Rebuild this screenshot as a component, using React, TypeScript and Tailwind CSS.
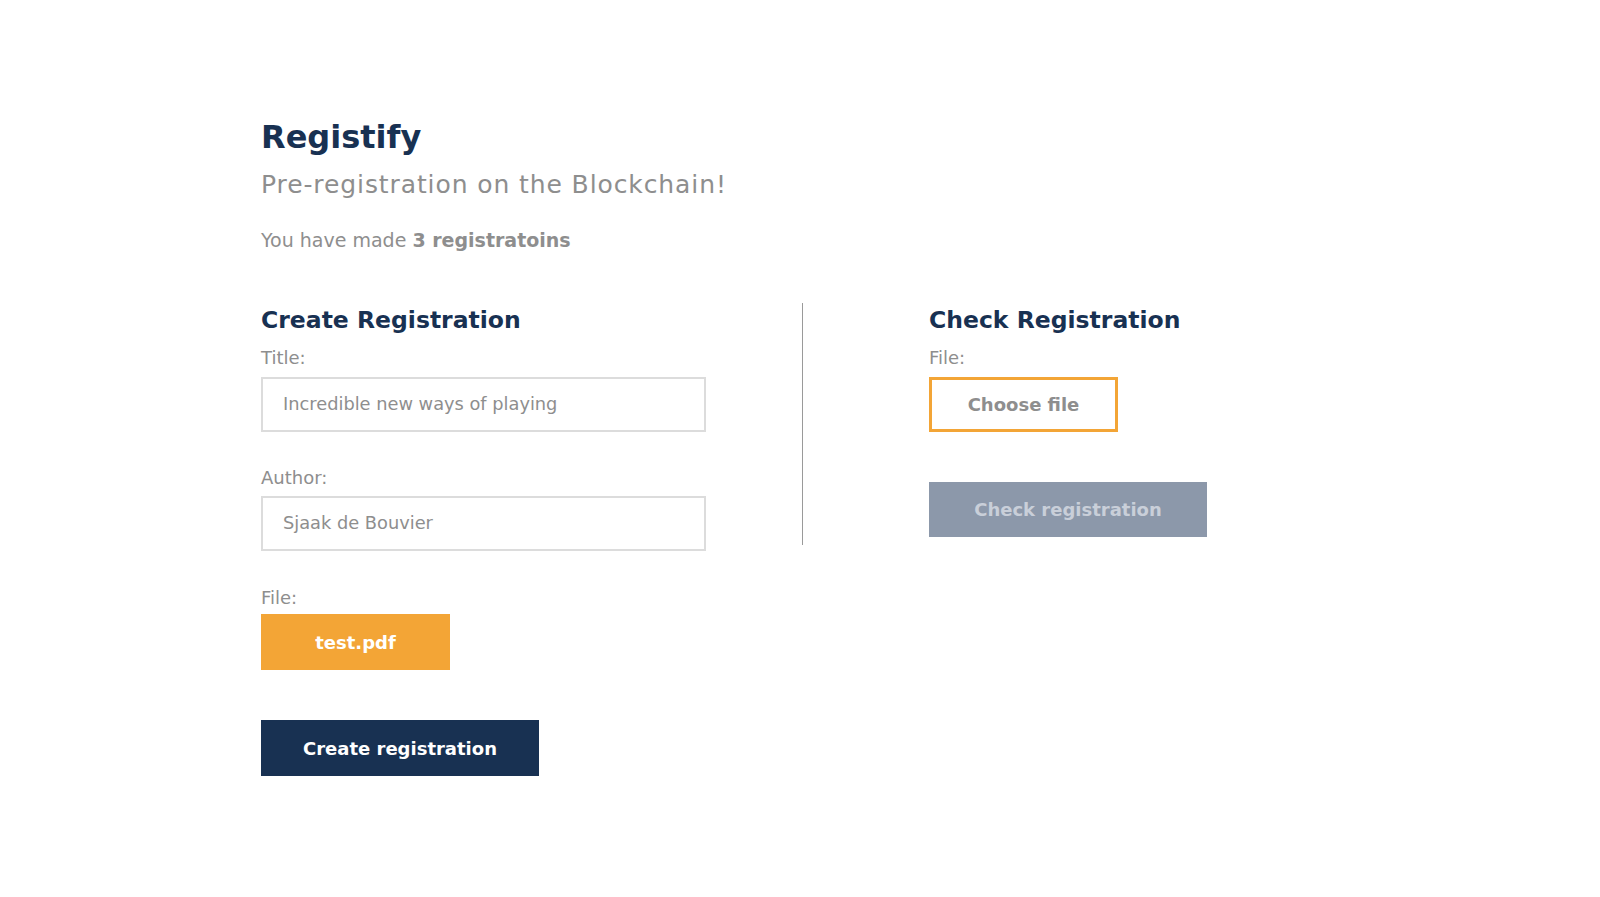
import React from "react";

export default function App() {
  return (
    <div className="min-h-screen bg-white font-['DejaVu_Sans',sans-serif]">
      <div className="mx-auto w-[1078px] pt-[117px]">
        {/* Header */}
        <h1 className="text-[32px] leading-[40px] font-bold text-[#183152]">
          Registify
        </h1>
        <p className="mt-[12px] text-[25px] leading-[32px] tracking-[0.9px] text-[#8e8e8e]">
          Pre-registration on the Blockchain!
        </p>
        <p className="mt-[26px] text-[19px] leading-[26px] text-[#8e8e8e]">
          You have made <span className="font-bold">3 registratoins</span>
        </p>

        <div className="mt-[50px] flex items-start">
          {/* Create Registration */}
          <div className="w-[541px]">
            <h2 className="text-[23.5px] leading-[34px] font-semibold text-[#183152]">
              Create Registration
            </h2>
            <label className="mt-[9px] block text-[18px] leading-[24px] text-[#8e8e8e]">
              Title:
            </label>
            <div className="mt-[7px] flex h-[55px] w-[445px] items-center border-2 border-[#dcdcdc] px-[20px] text-[17.8px] text-[#8e8e8e]">
              Incredible new ways of playing
            </div>
            <label className="mt-[34px] block text-[18px] leading-[24px] text-[#8e8e8e]">
              Author:
            </label>
            <div className="mt-[6px] flex h-[55px] w-[445px] items-center border-2 border-[#dcdcdc] px-[20px] text-[17.8px] text-[#8e8e8e]">
              Sjaak de Bouvier
            </div>
            <label className="mt-[35px] block text-[18px] leading-[24px] text-[#8e8e8e]">
              File:
            </label>
            <button className="mt-[4px] flex h-[56px] w-[189px] items-center justify-center bg-[#f3a536] text-[18px] font-bold text-white">
              test.pdf
            </button>
            <button className="mt-[50px] flex h-[56px] w-[278px] items-center justify-center bg-[#183152] text-[18px] font-bold text-white">
              Create registration
            </button>
          </div>

          {/* Check Registration */}
          <div className="border-l border-[#9a9a9a] pb-[8px] pl-[126px]">
            <h2 className="text-[23.5px] leading-[34px] font-semibold text-[#183152]">
              Check Registration
            </h2>
            <label className="mt-[9px] block text-[18px] leading-[24px] text-[#8e8e8e]">
              File:
            </label>
            <button className="mt-[7px] flex h-[55px] w-[189px] items-center justify-center border-[3px] border-[#f3a536] bg-white text-[18px] font-bold text-[#8e8e8e]">
              Choose file
            </button>
            <button className="mt-[50px] flex h-[55px] w-[278px] items-center justify-center bg-[#8c98aa] text-[18px] font-bold text-[#c9cfd9]">
              Check registration
            </button>
          </div>
        </div>
      </div>
    </div>
  );
}
